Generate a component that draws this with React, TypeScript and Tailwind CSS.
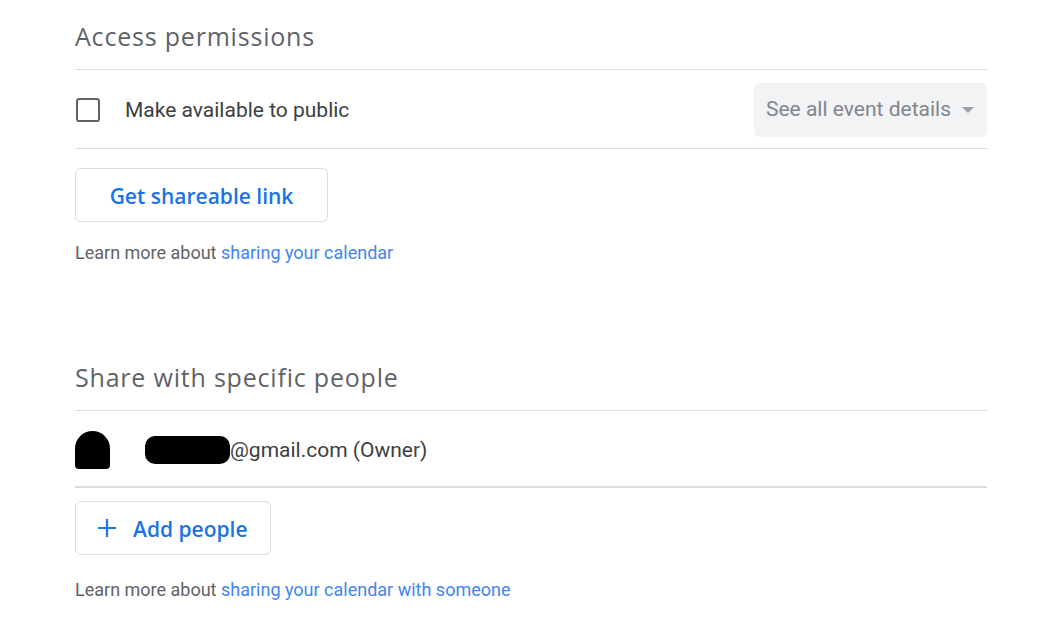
import React from "react";

const heading = { fontFamily: '"Open Sans", "Noto Sans", sans-serif' };
const body = { fontFamily: 'Roboto, "Liberation Sans", sans-serif' };

export default function App() {
  return (
    <div className="w-[1059px] h-[635px] bg-white overflow-hidden" style={body}>
      <div className="ml-[75px] w-[912px]">
        {/* Access permissions */}
        <div className="h-[70px] flex items-center border-b border-[#dadce0]">
          <h2 className="text-[25px] tracking-[0.8px] text-[#5f6368] mt-[4px]" style={heading}>
            Access permissions
          </h2>
        </div>
        <div className="h-[79px] flex items-center justify-between border-b border-[#dadce0]">
          <div className="flex items-center">
            <div className="w-[24px] h-[24px] ml-[1px] mt-[1px] border-[2px] border-[#5f6368] rounded-[3px]" />
            <span className="ml-[25px] text-[21px] text-[#3c4043] mt-[3px]">Make available to public</span>
          </div>
          <div className="w-[233px] h-[54px] bg-[#f1f3f4] rounded-[6px] flex items-center justify-between pl-[12px] pr-[13px] mt-[1px]">
            <span className="text-[21px] text-[#80868b] mt-[1px]">See all event details</span>
            <svg width="12" height="6" viewBox="0 0 12 6">
              <path d="M0 0 L12 0 L6 6 Z" fill="#9aa0a6" />
            </svg>
          </div>
        </div>
        <button
          className="mt-[19px] w-[253px] h-[54px] border border-[#dadce0] rounded-[6px] text-[21px] font-semibold text-[#1a73e8] flex items-center justify-center pt-[3px]"
          style={heading}
        >
          Get shareable link
        </button>
        <div className="mt-[19px] text-[18px] text-[#5f6368] leading-[24px]">
          Learn more about <span className="text-[#4285f4]">sharing your calendar</span>
        </div>

        {/* Share with specific people */}
        <div className="mt-[86px] h-[60px] flex items-center border-b border-[#dadce0]">
          <h2 className="text-[25px] tracking-[0.8px] text-[#5f6368] -mt-[6px]" style={heading}>
            Share with specific people
          </h2>
        </div>
        <div className="h-[77px] flex items-center border-b-2 border-[#dadce0]">
          <div className="w-[35px] h-[38px] bg-black rounded-t-[18px] rounded-b-[4px] mt-[2px]" />
          <div className="ml-[35px] w-[85px] h-[28px] bg-black rounded-[10px] mt-[3px]" />
          <span className="text-[21px] text-[#3c4043] mt-[4px]">@gmail.com (Owner)</span>
        </div>
        <button
          className="mt-[13px] w-[196px] h-[54px] border border-[#dadce0] rounded-[6px] text-[21px] font-semibold text-[#1a73e8] flex items-center pl-[21px] pt-[3px]"
          style={heading}
        >
          <svg width="20" height="20" viewBox="0 0 20 20" className="mr-[16px] -mt-[3px]">
            <path d="M10 1 V19 M1 10 H19" stroke="#1a73e8" strokeWidth="2.2" />
          </svg>
          Add people
        </button>
        <div className="mt-[23px] text-[18px] text-[#5f6368] leading-[24px]">
          Learn more about <span className="text-[#4285f4]">sharing your calendar with someone</span>
        </div>
      </div>
    </div>
  );
}
